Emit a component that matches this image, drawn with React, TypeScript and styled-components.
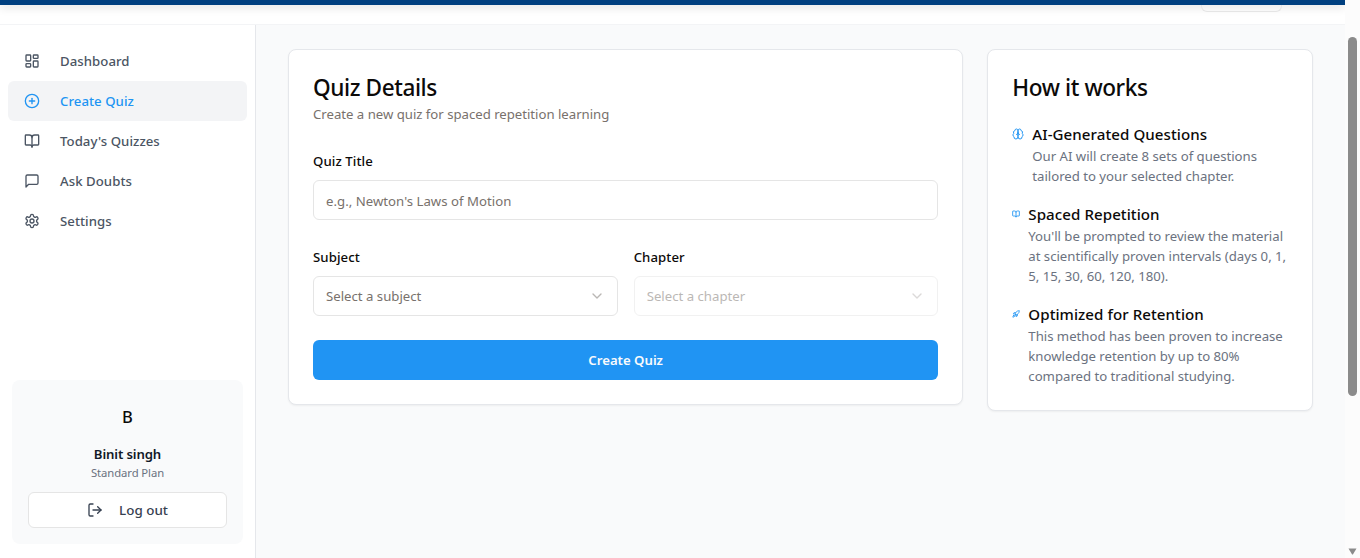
import React from "react";
import styled, { createGlobalStyle, css } from "styled-components";
import { LayoutDashboard, CirclePlus, LogOut, ChevronDown, BookOpen, Rocket } from "lucide-react";

const Global = createGlobalStyle`
  *, *::before, *::after { box-sizing: border-box; }
  html, body { margin: 0; padding: 0; overflow: hidden; }
  body {
    font-family: "Segoe UI", "Noto Sans", "Open Sans", sans-serif;
    font-size: 13.2px;
    line-height: 20px;
    color: #0c0a09;
  }
  h2, h3, p { margin: 0; }
  button, input { font-family: inherit; }
`;

const Window = styled.div`
  display: flex;
  width: 1360px;
  height: 558px;
  overflow: hidden;
  background: #f9fafb;
`;

const Page = styled.div`
  display: flex;
  flex-direction: column;
  width: 1345px;
  height: 558px;
`;

const TopBar = styled.header`
  flex: none;
  height: 25px;
  display: flex;
  flex-direction: column;
  align-items: flex-end;
  overflow: hidden;
  background: #fff;
  border-bottom: 1px solid #f3f4f6;
`;

const Banner = styled.div`
  flex: none;
  width: 100%;
  height: 5px;
  background: #004080;
  box-shadow: 0 2px 10px rgba(0, 0, 0, 0.15);
`;

const HeaderButton = styled.div`
  flex: none;
  width: 81px;
  height: 7px;
  margin-right: 63.5px;
  border: 1px solid #e5e5e5;
  border-top: 0;
  border-radius: 0 0 6px 6px;
`;

const Body = styled.div`
  flex: 1;
  display: flex;
  min-height: 0;
`;

const Sidebar = styled.aside`
  flex: none;
  width: 256px;
  display: flex;
  flex-direction: column;
  justify-content: space-between;
  padding: 16px 8px 14px;
  background: #fff;
  border-right: 1px solid #e5e7eb;
`;

const Nav = styled.nav`
  display: flex;
  flex-direction: column;
`;

const NavItem = styled.a<{ $active?: boolean }>`
  display: flex;
  align-items: center;
  gap: 20px;
  height: 40px;
  padding: 0 16px;
  border-radius: 6px;
  font-weight: 500;
  letter-spacing: 0.05px;
  color: #4b5563;
  ${(p) => p.$active && css`
    background: #f3f4f6;
    color: #2094f3;
  `}
`;

const Account = styled.section`
  display: flex;
  flex-direction: column;
  align-items: center;
  height: 164px;
  margin: 0 4px;
  padding: 16px;
  border-radius: 8px;
  background: #f9fafb;
`;

const Avatar = styled.div`
  height: 40px;
  line-height: 41px;
  font-size: 16.5px;
  font-weight: 500;
`;

const UserName = styled.div`
  margin-top: 8px;
  line-height: 20px;
  font-weight: 600;
  letter-spacing: -0.12px;
  color: #111827;
`;

const Plan = styled.div`
  height: 16px;
  font-size: 11.3px;
  line-height: 18px;
  letter-spacing: -0.08px;
  color: #6b7280;
`;

const LogoutButton = styled.button`
  display: flex;
  align-items: center;
  justify-content: center;
  gap: 16px;
  width: 100%;
  height: 36px;
  margin-top: 12px;
  padding: 0;
  border: 1px solid #e5e5e5;
  border-radius: 6px;
  background: #fff;
  font-size: 13.4px;
  font-weight: 500;
  color: #374151;
`;

const Main = styled.main`
  flex: 1;
  display: grid;
  grid-template-columns: 675.33px 325.67px;
  align-items: start;
  gap: 24px;
  padding: 24px 32px;
  background: #f9fafb;
`;

const Card = styled.section`
  padding: 24px;
  border: 1px solid #e5e7eb;
  border-radius: 8px;
  background: #fff;
  box-shadow: 0 1px 2px rgba(0, 0, 0, 0.05);
`;

const CardTitle = styled.h2`
  padding-top: 2px;
  font-size: 22.6px;
  line-height: 24px;
  font-weight: 500;
  letter-spacing: -0.42px;
`;

const Subtitle = styled.p`
  margin-top: 4px;
  letter-spacing: -0.02px;
  color: #78716c;
`;

const Form = styled.form`
  display: flex;
  flex-direction: column;
  gap: 24px;
  margin-top: 26px;
`;

const FieldRow = styled.div`
  display: grid;
  grid-template-columns: 1fr 1fr;
  gap: 16px;
  padding-top: 2px;
`;

const Field = styled.div`
  display: flex;
  flex-direction: column;
`;

const Label = styled.label`
  height: 22px;
  margin-bottom: 8px;
  line-height: 22px;
  font-weight: 500;
  letter-spacing: 0.08px;
`;

const control = css`
  width: 100%;
  height: 40px;
  padding: 0 12px;
  border: 1px solid #e5e5e5;
  border-radius: 6px;
  background: #fff;
  font-size: 13.2px;
  color: #78716c;
`;

const TextInput = styled.input`
  ${control}
  padding-top: 2px;
  letter-spacing: 0.02px;
  &::placeholder { color: #78716c; opacity: 1; }
`;

const Select = styled.div<{ $disabled?: boolean }>`
  ${control}
  display: flex;
  align-items: center;
  justify-content: space-between;
  opacity: ${(p) => (p.$disabled ? 0.5 : 1)};
  svg { opacity: 0.5; }
`;

const Submit = styled.button`
  height: 40px;
  border: 0;
  border-radius: 6px;
  background: #2094f3;
  color: #f8fafc;
  font-size: 13.2px;
  font-weight: 600;
`;

const Steps = styled.div`
  display: flex;
  flex-direction: column;
  gap: 16px;
  margin-top: 22px;
`;

const Step = styled.div`
  display: flex;
  gap: 8px;
  svg { flex: none; color: #2094f3; }
`;

const StepIcon = styled.div`
  display: flex;
  align-items: center;
  height: 24px;
`;

const StepTitle = styled.h3`
  font-size: 15.1px;
  line-height: 24px;
  font-weight: 500;
  letter-spacing: 0.06px;
`;

const StepText = styled.p`
  letter-spacing: -0.02px;
  color: #6b7280;
  white-space: nowrap;
`;

const ScrollTrack = styled.div`
  flex: none;
  display: flex;
  flex-direction: column;
  align-items: center;
  justify-content: space-between;
  width: 15px;
  height: 558px;
  padding: 37px 0 3px;
  background: #fcfcfc;
`;

const ScrollThumb = styled.div`
  width: 9px;
  height: 359px;
  border-radius: 5px;
  background: #8b8b8b;
`;

const Outline = ({ size = 16, children }: { size?: number; children: React.ReactNode }) => (
  <svg width={size} height={size} viewBox="0 0 24 24" fill="none" stroke="currentColor"
    strokeWidth="2" strokeLinecap="round" strokeLinejoin="round">{children}</svg>
);

const BrainIcon = ({ size }: { size: number }) => (
  <Outline size={size}>
    <path d="M12 5a3 3 0 1 0-5.997.125 4 4 0 0 0-2.526 5.77 4 4 0 0 0 .556 6.588A4 4 0 1 0 12 18Z" />
    <path d="M12 5a3 3 0 1 1 5.997.125 4 4 0 0 1 2.526 5.77 4 4 0 0 1-.556 6.588A4 4 0 1 1 12 18Z" />
    <path d="M15 13a4.5 4.5 0 0 1-3-4 4.5 4.5 0 0 1-3 4" />
  </Outline>
);

const MessageIcon = () => (
  <Outline><path d="M21 15a2 2 0 0 1-2 2H7l-4 4V5a2 2 0 0 1 2-2h14a2 2 0 0 1 2 2z" /></Outline>
);

const GearIcon = () => (
  <Outline>
    <path d="M12.22 2h-.44a2 2 0 0 0-2 2v.18a2 2 0 0 1-1 1.73l-.43.25a2 2 0 0 1-2 0l-.15-.08a2 2 0 0 0-2.73.73l-.22.38a2 2 0 0 0 .73 2.73l.15.1a2 2 0 0 1 1 1.72v.51a2 2 0 0 1-1 1.74l-.15.09a2 2 0 0 0-.73 2.73l.22.38a2 2 0 0 0 2.73.73l.15-.08a2 2 0 0 1 2 0l.43.25a2 2 0 0 1 1 1.73V20a2 2 0 0 0 2 2h.44a2 2 0 0 0 2-2v-.18a2 2 0 0 1 1-1.73l.43-.25a2 2 0 0 1 2 0l.15.08a2 2 0 0 0 2.73-.73l.22-.39a2 2 0 0 0-.73-2.73l-.15-.08a2 2 0 0 1-1-1.74v-.5a2 2 0 0 1 1-1.74l.15-.09a2 2 0 0 0 .73-2.73l-.22-.38a2 2 0 0 0-2.73-.73l-.15.08a2 2 0 0 1-2 0l-.43-.25a2 2 0 0 1-1-1.73V4a2 2 0 0 0-2-2z" />
    <circle cx="12" cy="12" r="3" />
  </Outline>
);

const navItems = [
  { label: "Dashboard", icon: <LayoutDashboard size={16} /> },
  { label: "Create Quiz", icon: <CirclePlus size={16} />, active: true },
  { label: "Today's Quizzes", icon: <BookOpen size={16} /> },
  { label: "Ask Doubts", icon: <MessageIcon /> },
  { label: "Settings", icon: <GearIcon /> },
];

const steps = [
  {
    title: "AI-Generated Questions",
    icon: <BrainIcon size={12} />,
    lines: ["Our AI will create 8 sets of questions", "tailored to your selected chapter."],
  },
  {
    title: "Spaced Repetition",
    icon: <BookOpen size={8} strokeWidth={2.6} />,
    lines: ["You'll be prompted to review the material", "at scientifically proven intervals (days 0, 1,", "5, 15, 30, 60, 120, 180)."],
  },
  {
    title: "Optimized for Retention",
    icon: <Rocket size={8} strokeWidth={2.6} />,
    lines: ["This method has been proven to increase", "knowledge retention by up to 80%", "compared to traditional studying."],
  },
];

export default function App() {
  return (
    <Window>
      <Global />
      <Page>
        <TopBar>
          <Banner />
          <HeaderButton />
        </TopBar>
        <Body>
          <Sidebar>
            <Nav>
              {navItems.map((item) => (
                <NavItem key={item.label} $active={item.active}>
                  {item.icon}
                  <span>{item.label}</span>
                </NavItem>
              ))}
            </Nav>
            <Account>
              <Avatar>B</Avatar>
              <UserName>Binit singh</UserName>
              <Plan>Standard Plan</Plan>
              <LogoutButton>
                <LogOut size={16} />
                <span>Log out</span>
              </LogoutButton>
            </Account>
          </Sidebar>
          <Main>
            <Card>
              <CardTitle>Quiz Details</CardTitle>
              <Subtitle>Create a new quiz for spaced repetition learning</Subtitle>
              <Form>
                <Field>
                  <Label>Quiz Title</Label>
                  <TextInput placeholder="e.g., Newton's Laws of Motion" />
                </Field>
                <FieldRow>
                  <Field>
                    <Label>Subject</Label>
                    <Select><span>Select a subject</span><ChevronDown size={16} /></Select>
                  </Field>
                  <Field>
                    <Label>Chapter</Label>
                    <Select $disabled><span>Select a chapter</span><ChevronDown size={16} /></Select>
                  </Field>
                </FieldRow>
                <Submit type="button">Create Quiz</Submit>
              </Form>
            </Card>
            <Card>
              <CardTitle>How it works</CardTitle>
              <Steps>
                {steps.map((step) => (
                  <Step key={step.title}>
                    <StepIcon>{step.icon}</StepIcon>
                    <div>
                      <StepTitle>{step.title}</StepTitle>
                      {step.lines.map((line) => <StepText key={line}>{line}</StepText>)}
                    </div>
                  </Step>
                ))}
              </Steps>
            </Card>
          </Main>
        </Body>
      </Page>
      <ScrollTrack>
        <ScrollThumb />
        <svg width="9" height="7" viewBox="0 0 9 7"><path d="M0.5 0.5h8L5.2 6q-.7 1-1.4 0z" fill="#8b8b8b" /></svg>
      </ScrollTrack>
    </Window>
  );
}
